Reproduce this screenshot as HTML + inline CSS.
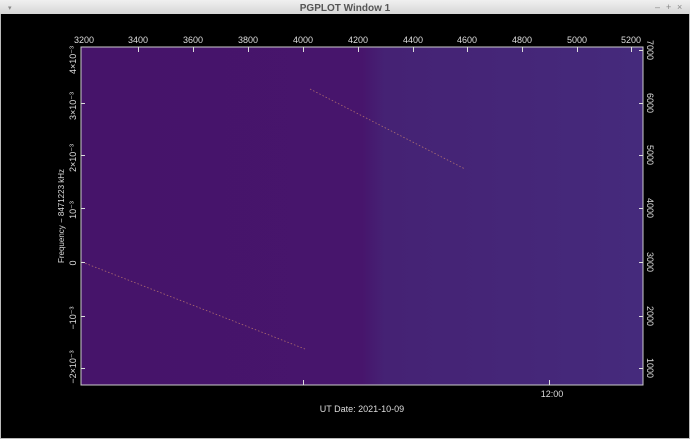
<!DOCTYPE html>
<html><head><style>
html,body{margin:0;padding:0;width:690px;height:439px;overflow:hidden;background:#000;font-family:"Liberation Sans",sans-serif}
</style></head><body>
<svg width="690" height="439" xmlns="http://www.w3.org/2000/svg" style="display:block">
<defs>
<linearGradient id="tb" x1="0" y1="0" x2="0" y2="1"><stop offset="0" stop-color="#f0f0f0"/><stop offset="1" stop-color="#d6d6d6"/></linearGradient>
<linearGradient id="bg" x1="0" y1="0" x2="1" y2="0">
<stop offset="0" stop-color="#46146a"/><stop offset="0.5" stop-color="#47156c"/><stop offset="0.54" stop-color="#452274"/><stop offset="1" stop-color="#452a7c"/></linearGradient>
</defs>
<rect width="690" height="439" fill="#000"/>
<rect x="0" y="0" width="690" height="14" fill="url(#tb)"/>
<rect x="0" y="14" width="1" height="425" fill="#bbb"/><rect x="689" y="14" width="1" height="425" fill="#bbb"/>
<rect x="0" y="438" width="690" height="1" fill="#bbb"/>
<text x="345" y="11" font-size="10" font-weight="bold" fill="#555" text-anchor="middle">PGPLOT Window 1</text>
<text x="8" y="10" font-size="7" fill="#888">▾</text>
<text x="655" y="10" font-size="9" fill="#888">–</text><text x="666" y="10" font-size="9" fill="#888">+</text><text x="677" y="10" font-size="9" fill="#888">×</text>
<rect x="81" y="47" width="562" height="338" fill="url(#bg)"/>
<rect x="81" y="47" width="562" height="338" fill="none" stroke="#ccc" stroke-width="1"/>
<line x1="82" y1="262" x2="305" y2="349" stroke="#d89070" stroke-width="0.8" stroke-dasharray="1.5 2" opacity="0.7"/>
<line x1="310" y1="89" x2="465" y2="169" stroke="#d89070" stroke-width="0.8" stroke-dasharray="1.5 2" opacity="0.7"/>
<g stroke="#ddd" stroke-width="1">
<line x1="138.5" y1="47" x2="138.5" y2="52"/><line x1="193.5" y1="47" x2="193.5" y2="52"/><line x1="248.5" y1="47" x2="248.5" y2="52"/><line x1="303.5" y1="47" x2="303.5" y2="52"/><line x1="358.5" y1="47" x2="358.5" y2="52"/><line x1="413.5" y1="47" x2="413.5" y2="52"/><line x1="467.5" y1="47" x2="467.5" y2="52"/><line x1="522.5" y1="47" x2="522.5" y2="52"/><line x1="577.5" y1="47" x2="577.5" y2="52"/><line x1="631.5" y1="47" x2="631.5" y2="52"/>
<line x1="81" y1="103.5" x2="85" y2="103.5"/><line x1="81" y1="155.5" x2="85" y2="155.5"/><line x1="81" y1="208.5" x2="85" y2="208.5"/><line x1="81" y1="262.5" x2="85" y2="262.5"/><line x1="81" y1="316.5" x2="85" y2="316.5"/><line x1="81" y1="368.5" x2="85" y2="368.5"/>
<line x1="639" y1="50.5" x2="643" y2="50.5"/><line x1="639" y1="103.5" x2="643" y2="103.5"/><line x1="639" y1="155.5" x2="643" y2="155.5"/><line x1="639" y1="208.5" x2="643" y2="208.5"/><line x1="639" y1="262.5" x2="643" y2="262.5"/><line x1="639" y1="316.5" x2="643" y2="316.5"/><line x1="639" y1="368.5" x2="643" y2="368.5"/>
<line x1="303.5" y1="380" x2="303.5" y2="385"/><line x1="549.5" y1="380" x2="549.5" y2="385"/>
</g>
<g fill="#ddd" font-size="9" text-anchor="middle">
<text x="84" y="43">3200</text><text x="138" y="43">3400</text><text x="193" y="43">3600</text><text x="248" y="43">3800</text><text x="303" y="43">4000</text><text x="358" y="43">4200</text><text x="413" y="43">4400</text><text x="467" y="43">4600</text><text x="522" y="43">4800</text><text x="577" y="43">5000</text><text x="631" y="43">5200</text>
<text x="552" y="397">12:00</text>
<text x="362" y="412">UT Date: 2021-10-09</text>
</g>
<g fill="#ddd" font-size="9" text-anchor="middle">
<text transform="translate(76,60) rotate(-90)">4×10⁻³</text>
<text transform="translate(76,106) rotate(-90)">3×10⁻³</text>
<text transform="translate(76,158) rotate(-90)">2×10⁻³</text>
<text transform="translate(76,210) rotate(-90)">10⁻³</text>
<text transform="translate(76,263) rotate(-90)">0</text>
<text transform="translate(76,318) rotate(-90)">−10⁻³</text>
<text transform="translate(76,367) rotate(-90)">−2×10⁻³</text>
<text transform="translate(64,216) rotate(-90)" font-size="8">Frequency − 8471223 kHz</text>
<text transform="translate(647,50) rotate(90)">7000</text>
<text transform="translate(647,103) rotate(90)">6000</text>
<text transform="translate(647,155) rotate(90)">5000</text>
<text transform="translate(647,208) rotate(90)">4000</text>
<text transform="translate(647,262) rotate(90)">3000</text>
<text transform="translate(647,316) rotate(90)">2000</text>
<text transform="translate(647,368) rotate(90)">1000</text>
</g>
</svg>
</body></html>
